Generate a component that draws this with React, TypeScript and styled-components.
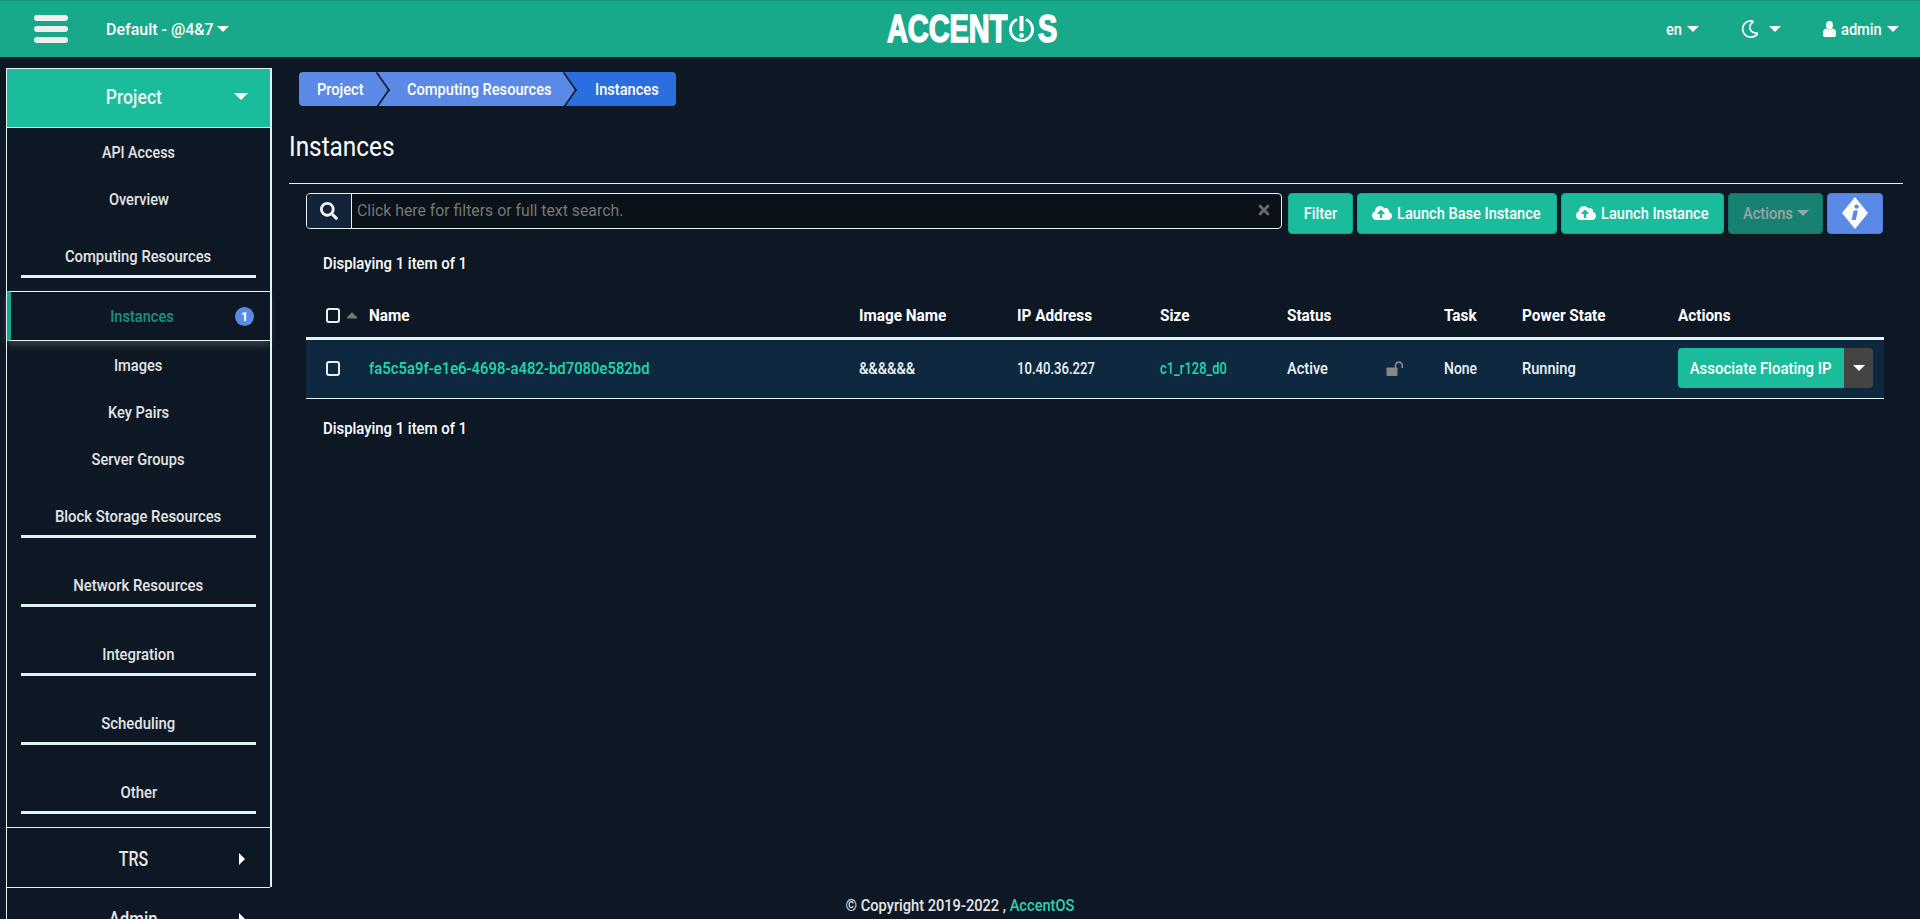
import React from 'react'
import styled, { createGlobalStyle } from 'styled-components'
import { FaSearch, FaTimes, FaCloudUploadAlt, FaRegMoon, FaCaretUp } from 'react-icons/fa'

const FONT = '"Roboto", "Liberation Sans", sans-serif'
const LINE = '#e0f4f4'
const BG = '#0e1824'
const TABLE_COLUMNS = '63px 490px 158px 143px 127px 99px 58px 78px 156px 205px'

const GlobalStyle = createGlobalStyle`
  html, body {
    margin: 0;
    height: 919px;
    overflow: hidden;
    background: ${BG};
    color: #fff;
    font-family: ${FONT};
    font-size: 17px;
    font-weight: 500;
  }
  * { box-sizing: border-box; }
`

// the app's font is a condensed one, no such family here so squeeze Roboto
const Narrow = styled.span<{ $x?: number; $o?: 'left' | 'center'; $w?: number }>`
  display: inline-block;
  flex: none;
  white-space: nowrap;
  transform: scaleX(${(p) => p.$x ?? 0.86});
  transform-origin: ${(p) => p.$o ?? 'left'} center;
  ${(p) => (p.$w ? `width: ${p.$w}px;` : '')}
`

const Caret = styled.span<{ $dir?: 'down' | 'right'; $size?: number; $color?: string }>`
  display: inline-block;
  width: 0;
  height: 0;
  flex: none;
  ${({ $dir = 'down', $size = 6, $color = '#fff' }) =>
    $dir === 'down'
      ? `border-left: ${$size}px solid transparent;
         border-right: ${$size}px solid transparent;
         border-top: ${$size}px solid ${$color};`
      : `border-top: ${$size}px solid transparent;
         border-bottom: ${$size}px solid transparent;
         border-left: ${$size}px solid ${$color};`}
`

const Page = styled.div`
  display: flex;
  flex-direction: column;
  height: 919px;
  overflow: hidden;
`

const Topbar = styled.header`
  flex: none;
  height: 57px;
  display: grid;
  grid-template-columns: 1fr auto 1fr;
  align-items: center;
  background: #18a88a;
  border-top: 1px solid #149a7e;
`

const TopLeft = styled.div`
  display: flex;
  align-items: center;
  padding-left: 34px;
`

const Burger = styled.div`
  display: flex;
  flex-direction: column;
  gap: 5px;
  width: 34px;
  margin-right: 38px;
  span {
    display: block;
    height: 6px;
    border-radius: 3px;
    background: #eee;
  }
`

const TopLink = styled.div`
  display: flex;
  align-items: center;
  gap: 5px;
  font-size: 17px;
  color: #fff;
`

const Logo = styled.div`
  display: flex;
  align-items: center;
  width: 169px;
  height: 27px;
  margin-left: 23px;
  font-family: "Liberation Sans", sans-serif;
  font-weight: 700;
  font-size: 38px;
  line-height: 27px;
  color: #fff;
  -webkit-text-stroke: 1.6px #fff;
  svg { margin: 0 3px 0 2px; flex: none; }
`

const TopRight = styled.div`
  display: flex;
  justify-content: flex-end;
  align-items: center;
  padding-right: 21px;
  gap: 42px;
`

const Body = styled.div`
  flex: 1;
  display: flex;
  min-height: 0;
`

const Sidebar = styled.aside`
  flex: none;
  width: 265px;
  margin: 11px 0 0 6px;
  border-left: 1px solid ${LINE};
  height: 851px;
`

const SidePanel = styled.div`
  border-right: 2px solid ${LINE};
  width: 265px;
  margin-right: -1px;
`

const SectionHead = styled.div<{ $active?: boolean }>`
  position: relative;
  display: flex;
  align-items: center;
  justify-content: center;
  height: 60px;
  padding-right: 10px;
  padding-top: ${(p) => (p.$active ? '0' : '2px')};
  padding-bottom: ${(p) => (p.$active ? '2px' : '0')};
  font-size: 20px;
  font-weight: 500;
  color: ${(p) => (p.$active ? '#e8f5f2' : '#e6e6e6')};
  background: ${(p) => (p.$active ? '#1abc9c' : 'transparent')};
  border-top: 1px solid ${LINE};
  border-bottom: ${(p) => (p.$active ? `1px solid ${LINE}` : 'none')};
  width: 263px;
  ${Caret} {
    position: absolute;
    right: ${(p) => (p.$active ? '22px' : '25px')};
    top: 50%;
    margin-top: -5px;
  }
`

const SubItem = styled.div`
  display: flex;
  align-items: center;
  justify-content: center;
  height: 47px;
  width: 263px;
  font-size: 17px;
  color: #e4e4e4;
`

const ActiveItem = styled.div`
  position: relative;
  display: flex;
  align-items: center;
  justify-content: center;
  height: 50px;
  width: 263px;
  margin-top: 1px;
  padding-left: 4px;
  font-size: 17px;
  color: #14967c;
  border-top: 1px solid ${LINE};
  border-bottom: 1px solid ${LINE};
  border-left: 4px solid #18a88a;
  box-shadow: 0 4px 8px rgba(255, 255, 255, 0.18);
`

const Badge = styled.span`
  position: absolute;
  right: 16px;
  top: 15px;
  width: 19px;
  height: 19px;
  border-radius: 50%;
  display: flex;
  align-items: center;
  justify-content: center;
  background: #5a8ae6;
  color: #fff;
  font-size: 13px;
  font-weight: 700;
`

const Group = styled.div`
  width: 263px;
  padding: 23px 14px 0;
  margin-bottom: 13px;
  text-align: center;
  font-size: 17px;
  line-height: 22px;
  color: #e4e4e4;
  &::after {
    content: '';
    display: block;
    height: 3px;
    margin-top: 8px;
    background: ${LINE};
  }
`

const Main = styled.main`
  flex: 1;
  min-width: 0;
  display: flex;
  flex-direction: column;
  padding: 15px 17px 0 18px;
`

const Crumbs = styled.nav`
  display: flex;
  margin-left: 10px;
  height: 34px;
  width: 377px;
  border-radius: 4px;
  overflow: hidden;
`

const Crumb = styled.div<{ $current?: boolean; $w: number; $pad: number; $z: number }>`
  position: relative;
  z-index: ${(p) => p.$z};
  display: flex;
  align-items: center;
  flex: none;
  width: ${(p) => p.$w}px;
  padding-left: ${(p) => p.$pad}px;
  font-size: 17px;
  color: #fff;
  background: ${(p) => (p.$current ? '#2b6ee0' : '#5a8ae6')};
  ${(p) =>
    p.$current
      ? ''
      : `&::after {
    content: '';
    position: absolute;
    right: -12px;
    top: 5px;
    width: 24px;
    height: 24px;
    transform: scaleX(0.7) rotate(45deg);
    background: #5a8ae6;
    border-top: 2px solid ${BG};
    border-right: 2px solid ${BG};
  }`}
`

const Title = styled.h1`
  margin: 25px 0 0 0;
  height: 32px;
  font-size: 28px;
  line-height: 32px;
  font-weight: 400;
  color: #fff;
`

const Rule = styled.hr`
  margin: 20px 0 9px;
  border: 0;
  height: 1px;
  background: ${LINE};
`

const Toolbar = styled.div`
  display: flex;
  gap: 4px;
  padding-left: 17px;
  padding-right: 19px;
`

const Search = styled.div`
  flex: none;
  width: 976px;
  height: 36px;
  margin-right: 2px;
  display: flex;
  align-items: stretch;
  border: 1px solid ${LINE};
  border-radius: 4px;
  background: #0a1118;
  overflow: hidden;
  font-size: 17px;
  font-weight: 400;
`

const SearchIcon = styled.div`
  flex: none;
  width: 45px;
  display: flex;
  align-items: center;
  justify-content: center;
  background: #12233a;
  border-right: 1px solid ${LINE};
  color: #f2f2f2;
  font-size: 18px;
`

const SearchInput = styled.div`
  flex: 1;
  display: flex;
  align-items: center;
  justify-content: space-between;
  padding: 0 9px 2px 5px;
  color: #777;
  svg { color: #6a6a6a; font-size: 16px; }
`

const Button = styled.button<{ $w: number; $kind?: 'primary' | 'muted' | 'info'; $pad?: number }>`
  flex: none;
  width: ${(p) => p.$w}px;
  height: 41px;
  padding: 0 0 2px ${(p) => p.$pad ?? 0}px;
  display: flex;
  align-items: center;
  justify-content: ${(p) => (p.$pad ? 'flex-start' : 'center')};
  gap: 5px;
  border: 1px solid #16a085;
  border-radius: 4px;
  font-family: ${FONT};
  font-weight: 500;
  font-size: 17px;
  color: ${(p) => (p.$kind === 'muted' ? '#9aa5a3' : '#fff')};
  border-color: ${(p) => (p.$kind === 'muted' ? '#147565' : p.$kind === 'info' ? '#4f7dd6' : '#17a88c')};
  background: ${(p) =>
    p.$kind === 'muted' ? '#178271' : p.$kind === 'info' ? '#5a8ae6' : '#1abc9c'};
  svg { font-size: 20px; flex: none; }
`

const Count = styled.div<{ $top: number }>`
  margin-top: ${(p) => p.$top}px;
  padding-left: 34px;
  font-size: 17px;
  line-height: 22px;
  color: #fff;
`

const Table = styled.div`
  margin: 29px 19px 0 17px;
`

const HeadRow = styled.div`
  display: grid;
  grid-template-columns: ${TABLE_COLUMNS};
  align-items: center;
  height: 37px;
  padding-bottom: 10px;
  border-bottom: 3px solid ${LINE};
  font-size: 17px;
  font-weight: 700;
`

const DataRow = styled.div`
  display: grid;
  grid-template-columns: ${TABLE_COLUMNS};
  align-items: center;
  height: 59px;
  padding-bottom: 2px;
  background: #0e2840;
  border-bottom: 1px solid ${LINE};
  font-size: 17px;
  color: #eef4f6;
`

const CheckCell = styled.div`
  display: flex;
  align-items: center;
  gap: 3px;
  padding-left: 20px;
  svg { color: #777; font-size: 18px; }
`

const Check = styled.span`
  width: 14px;
  height: 15px;
  border: 2px solid #e6eef0;
  border-radius: 3px;
  flex: none;
`

const LinkText = styled(Narrow)`
  color: #22d8b0;
`

const SplitButton = styled.div`
  display: flex;
  height: 40px;
  width: 195px;
  border-radius: 4px;
  overflow: hidden;
`

const SplitMain = styled.div`
  width: 166px;
  display: flex;
  align-items: center;
  justify-content: center;
  background: #1abc9c;
  color: #fff;
  font-size: 17px;
`

const SplitToggle = styled.div`
  flex: 1;
  display: flex;
  align-items: center;
  justify-content: center;
  background: #444;
`

const Footer = styled.footer`
  margin-top: auto;
  padding: 0 272px 3px 0;
  text-align: center;
  font-size: 17px;
  line-height: 22px;
  color: #e6e6e6;
  em { font-style: normal; color: #2fd0ac; }
`

const groupsAfter = ['Block Storage Resources', 'Network Resources', 'Integration', 'Scheduling', 'Other']

const PowerO = () => (
  <svg width="27" height="27" viewBox="0 0 27 27" aria-hidden="true">
    <path d="M9 3.5a11 11 0 1 0 9 0" fill="none" stroke="#fff" strokeWidth="3" />
    <rect x="11.5" y="0" width="4" height="15" fill="#fff" />
    <circle cx="13.5" cy="19.5" r="2.4" fill="#fff" />
  </svg>
)

const InfoDiamond = () => (
  <svg width="26" height="32" viewBox="0 0 26 32" aria-hidden="true">
    <polygon points="13,0 26,16 13,32 0,16" fill="#fff" />
    <circle cx="14.6" cy="9.6" r="2.2" fill="#5a8ae6" />
    <path d="M11.6 13.5h4.2l-2 9.5h-4.2z" fill="#5a8ae6" />
  </svg>
)

const UserIcon = () => (
  <svg width="13" height="16" viewBox="0 0 13 16" aria-hidden="true">
    <ellipse cx="6.5" cy="4.2" rx="3.4" ry="4.2" fill="#fff" />
    <path d="M0 14.2V11c0-2 1.4-3.2 3.2-3.6 1.9 1.6 4.7 1.6 6.6 0C11.6 7.8 13 9 13 11v3.2c0 1-1 1.8-2 1.8H2c-1 0-2-.8-2-1.8z" fill="#fff" />
  </svg>
)

const OpenLock = () => (
  <svg width="18" height="15" viewBox="0 0 18 15" aria-hidden="true">
    <rect x="0.5" y="6.5" width="11" height="8.5" rx="1" fill="#888" />
    <path d="M9.5 7V4.5a3.4 3.4 0 0 1 6.8 0V7" fill="none" stroke="#888" strokeWidth="1.6" />
  </svg>
)

const App = () => {
  return (
    <Page>
      <GlobalStyle />
      <Topbar>
        <TopLeft>
          <Burger>
            <span />
            <span />
            <span />
          </Burger>
          <TopLink>
            <Narrow $w={106} $x={0.94}>Default - @4&amp;7</Narrow>
            <Caret />
          </TopLink>
        </TopLeft>
        <Logo>
          <Narrow $w={119} $x={0.76}>ACCENT</Narrow>
          <PowerO />
          <Narrow $w={18} $x={0.76}>S</Narrow>
        </Logo>
        <TopRight>
          <TopLink>
            <Narrow $w={16}>en</Narrow>
            <Caret />
          </TopLink>
          <TopLink>
            <FaRegMoon size={18} style={{ marginRight: 5 }} />
            <Caret />
          </TopLink>
          <TopLink>
            <UserIcon />
            <Narrow $w={41}>admin</Narrow>
            <Caret />
          </TopLink>
        </TopRight>
      </Topbar>
      <Body>
        <Sidebar>
          <SidePanel>
            <SectionHead $active>
              <Narrow $o="center" $x={0.88}>Project</Narrow>
              <Caret $size={7} />
            </SectionHead>
            <SubItem><Narrow $o="center" $x={0.84}>API Access</Narrow></SubItem>
            <SubItem><Narrow $o="center">Overview</Narrow></SubItem>
            <Group><Narrow $o="center" $x={0.87}>Computing Resources</Narrow></Group>
            <ActiveItem>
              <Narrow $o="center">Instances</Narrow>
              <Badge>1</Badge>
            </ActiveItem>
            <SubItem><Narrow $o="center">Images</Narrow></SubItem>
            <SubItem><Narrow $o="center">Key Pairs</Narrow></SubItem>
            <SubItem><Narrow $o="center">Server Groups</Narrow></SubItem>
            {groupsAfter.map((g) => (
              <Group key={g}><Narrow $o="center" $x={0.875}>{g}</Narrow></Group>
            ))}
            <SectionHead>
              <Narrow $o="center" $x={0.8}>TRS</Narrow>
              <Caret $dir="right" $size={6} />
            </SectionHead>
          </SidePanel>
          <SectionHead>
            <Narrow $o="center" $x={0.84}>Admin</Narrow>
            <Caret $dir="right" $size={6} />
          </SectionHead>
        </Sidebar>
        <Main>
          <Crumbs>
            <Crumb $w={79} $pad={18} $z={3}>
              <Narrow>Project</Narrow>
            </Crumb>
            <Crumb $w={187} $pad={29} $z={2}>
              <Narrow>Computing Resources</Narrow>
            </Crumb>
            <Crumb $w={111} $pad={30} $z={1} $current>
              <Narrow>Instances</Narrow>
            </Crumb>
          </Crumbs>
          <Title>
            <Narrow $x={0.87}>Instances</Narrow>
          </Title>
          <Rule />
          <Toolbar>
            <Search>
              <SearchIcon>
                <FaSearch />
              </SearchIcon>
              <SearchInput>
                <Narrow $x={0.93}>Click here for filters or full text search.</Narrow>
                <FaTimes />
              </SearchInput>
            </Search>
            <Button $w={65}><Narrow $o="center">Filter</Narrow></Button>
            <Button $w={200} $pad={14}>
              <FaCloudUploadAlt />
              <Narrow>Launch Base Instance</Narrow>
            </Button>
            <Button $w={163} $pad={14}>
              <FaCloudUploadAlt />
              <Narrow>Launch Instance</Narrow>
            </Button>
            <Button $w={95} $kind="muted" $pad={14}>
              <Narrow $w={49}>Actions</Narrow>
              <Caret $color="#9aa5a3" />
            </Button>
            <Button $w={56} $kind="info">
              <InfoDiamond />
            </Button>
          </Toolbar>
          <Count $top={18}><Narrow $x={0.875}>Displaying 1 item of 1</Narrow></Count>
          <Table>
            <HeadRow>
              <CheckCell>
                <Check />
                <FaCaretUp />
              </CheckCell>
              <Narrow $x={0.9}>Name</Narrow>
              <Narrow $x={0.9}>Image Name</Narrow>
              <Narrow $x={0.9}>IP Address</Narrow>
              <Narrow $x={0.9}>Size</Narrow>
              <Narrow $x={0.9}>Status</Narrow>
              <div />
              <Narrow $x={0.9}>Task</Narrow>
              <Narrow $x={0.9}>Power State</Narrow>
              <Narrow $x={0.9}>Actions</Narrow>
            </HeadRow>
            <DataRow>
              <CheckCell>
                <Check />
              </CheckCell>
              <LinkText $x={0.875}>fa5c5a9f-e1e6-4698-a482-bd7080e582bd</LinkText>
              <Narrow>&amp;&amp;&amp;&amp;&amp;&amp;</Narrow>
              <Narrow $x={0.77}>10.40.36.227</Narrow>
              <LinkText $x={0.76}>c1_r128_d0</LinkText>
              <Narrow>Active</Narrow>
              <OpenLock />
              <Narrow $x={0.82}>None</Narrow>
              <Narrow>Running</Narrow>
              <SplitButton>
                <SplitMain>
                  <Narrow $o="center" $x={0.88}>Associate Floating IP</Narrow>
                </SplitMain>
                <SplitToggle>
                  <Caret />
                </SplitToggle>
              </SplitButton>
            </DataRow>
          </Table>
          <Count $top={18}><Narrow $x={0.875}>Displaying 1 item of 1</Narrow></Count>
          <Footer>
            <Narrow $o="center">
              © Copyright 2019-2022 , <em>AccentOS</em>
            </Narrow>
          </Footer>
        </Main>
      </Body>
    </Page>
  )
}

export default App
